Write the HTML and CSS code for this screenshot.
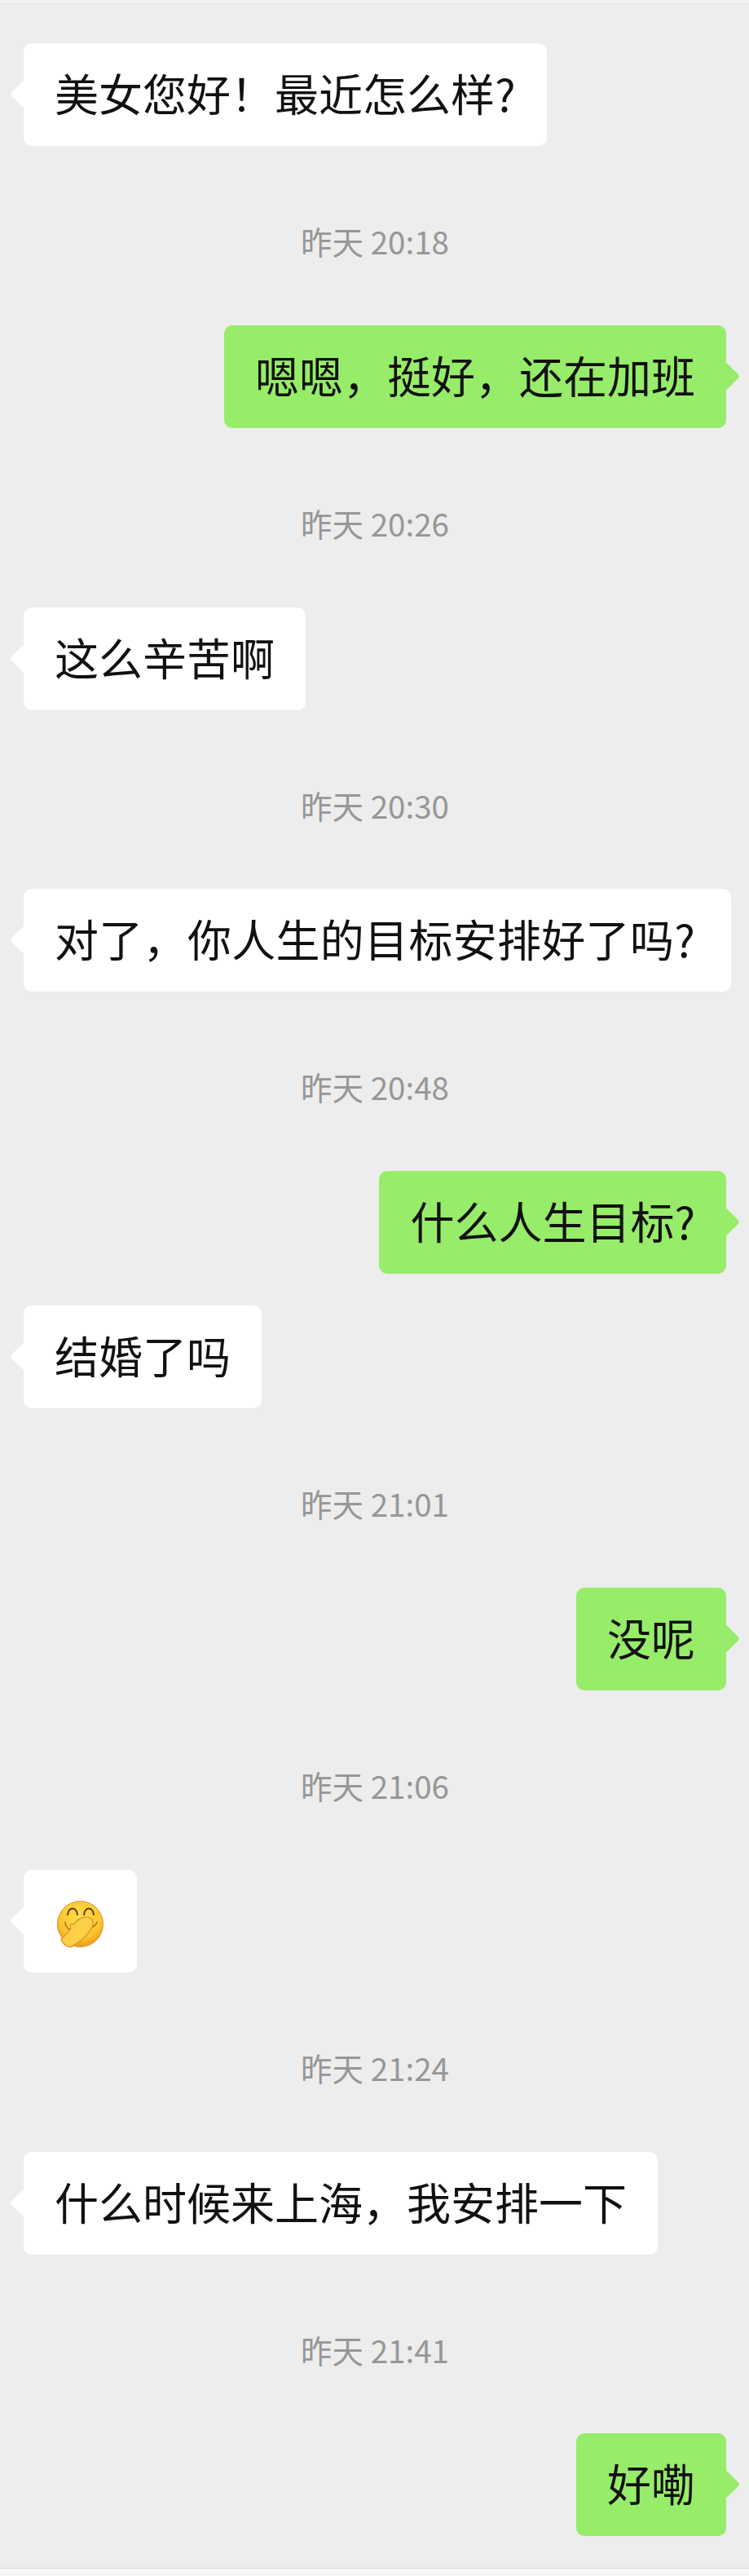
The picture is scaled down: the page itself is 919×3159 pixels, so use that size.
FILE: index.html
```html
<!DOCTYPE html>
<html>
	<head>
		<meta charset="UTF-8">
		<title>chat</title>
		<link rel="stylesheet" href="styles.css">
	</head>
	<body>
		<div id="top_bar"></div>
		<div id="chat">
			<div class="msg left"><div class="bubble">美女您好！最近怎么样?</div></div>
			<div class="time">昨天 20:18</div>
			<div class="msg right"><div class="bubble">嗯嗯，挺好，还在加班</div></div>
			<div class="time">昨天 20:26</div>
			<div class="msg left"><div class="bubble">这么辛苦啊</div></div>
			<div class="time">昨天 20:30</div>
			<div class="msg left"><div class="bubble long">对了，你人生的目标安排好了吗?</div></div>
			<div class="time">昨天 20:48</div>
			<div class="msg right"><div class="bubble">什么人生目标?</div></div>
			<div class="msg left next"><div class="bubble">结婚了吗</div></div>
			<div class="time">昨天 21:01</div>
			<div class="msg right"><div class="bubble">没呢</div></div>
			<div class="time">昨天 21:06</div>
			<div class="msg left">
				<div class="bubble emoji_box">
					<svg class="emoji" viewBox="0 0 76 76">
						<defs>
							<radialGradient id="face" cx="50%" cy="35%" r="65%">
								<stop offset="0" stop-color="#ffdf4a"/>
								<stop offset="0.7" stop-color="#fcc52e"/>
								<stop offset="1" stop-color="#ee9a1c"/>
							</radialGradient>
						</defs>
						<circle cx="38.5" cy="39.5" r="28" fill="url(#face)" stroke="#d8902a" stroke-width="1"/>
						<path d="M23 28c1-10 11-10 12 0M43 28c1-10 11-10 12 0" fill="none" stroke="#5a3a10" stroke-width="2" stroke-linecap="round"/>
						<path d="M20 37c0 4 2 7 5 9M54 43c2-1 4-3 5-6" fill="none" stroke="#b8741a" stroke-width="1.6" stroke-linecap="round"/>
						<path d="M15 58C20 54 24 49 27 45C25 41 27 38 31 40C34 34 42 30 47 31C53 32 56 37 53 43C49 52 40 60 31 65C28 68 24 68 21 66C18 64 16 61 15 58z" fill="#fbd047" stroke="#d8902a" stroke-width="1.2"/>
					</svg>
				</div>
			</div>
			<div class="time">昨天 21:24</div>
			<div class="msg left"><div class="bubble">什么时候来上海，我安排一下</div></div>
			<div class="time">昨天 21:41</div>
			<div class="msg right"><div class="bubble">好嘞</div></div>
		</div>
		<div id="bottom_bar"></div>
	</body>
</html>
```
FILE: styles.css
```css
body{
    margin: 0;
    background: #ededed;
    font-family: "Noto Sans CJK SC", "Liberation Sans", sans-serif;
}
#top_bar{
    height: 4px;
    background: #f0f0f0;
    border-bottom: 1px solid #e2e2e2;
}
#chat{
    height: 3144px;
    padding: 48px 28px 0 29px;
    box-sizing: border-box;
}
#bottom_bar{
    height: 9px;
    background: #f7f7f7;
    border-top: 1px solid #d6d6d6;
}
.msg{
    display: flex;
}
.msg.right{
    justify-content: flex-end;
}
.msg.next{
    margin-top: 39px;
}
.bubble{
    position: relative;
    height: 126px;
    box-sizing: border-box;
    padding: 0 38px;
    border-radius: 10px;
    background: #fff;
    color: #111;
    font-size: 54px;
    line-height: 122px;
    white-space: nowrap;
}
.bubble.long{
    padding-right: 44px;
    letter-spacing: .3px;
}
.bubble:before{
    content: "";
    position: absolute;
    top: 50px;
    width: 25px;
    height: 25px;
    border-radius: 4px;
    background: inherit;
    transform: rotate(45deg);
}
.left .bubble:before{
    left: -12px;
}
.right .bubble{
    background: #97ec6a;
}
.right .bubble:before{
    right: -12px;
}
.time{
    height: 40px;
    margin: 96px 0 83.8px;
    text-align: center;
    color: #979797;
    font-size: 38.5px;
    line-height: 40px;
}
.emoji_box{
    display: flex;
    align-items: center;
    width: 139px;
    padding: 0 31px;
}
.emoji{
    width: 76px;
    height: 76px;
    flex: none;
    margin-top: 5px;
}
```
